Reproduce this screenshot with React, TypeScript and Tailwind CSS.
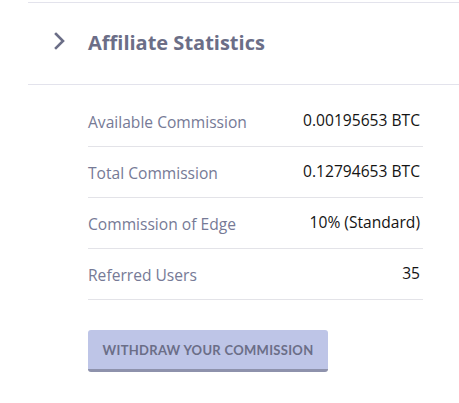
const rows = [
  { label: "Available Commission", value: "0.00195653 BTC" },
  { label: "Total Commission", value: "0.12794653 BTC" },
  { label: "Commission of Edge", value: "10% (Standard)" },
  { label: "Referred Users", value: "35" },
];

export default function App() {
  return (
    <div className="h-[403px] w-[459px] bg-white pt-[2px] font-['Open_Sans',sans-serif]">
      <div className="ml-[28px] flex h-[83px] items-center border-y border-[#e3e3ec] pl-[25px]">
        <svg width="14" height="20" viewBox="0 0 14 20" className="mt-[-6px]">
          <path d="M3 3 L10 10 L3 17" fill="none" stroke="#6b6e87" strokeWidth="2.6" strokeLinecap="square" />
        </svg>
        <h2 className="ml-[21px] mt-[-2px] text-[20px] font-bold text-[#6b6e87]">Affiliate Statistics</h2>
      </div>

      <div className="ml-[88px] w-[335px] pt-[11px]">
        {rows.map((row) => (
          <div
            key={row.label}
            className="flex h-[51px] items-center justify-between border-b border-[#e3e3e8] pt-[3px] text-[15.6px]"
          >
            <span className="text-[#767a96]">{row.label}</span>
            <span className="mt-[-4px] pr-[3px] text-[#141414]">{row.value}</span>
          </div>
        ))}
        <button
          type="button"
          className="mt-[30px] h-[42px] w-[240px] rounded-[3px] border-b-[3px] border-[#8e92ac] bg-[#bec5e7] pt-[2px] font-['Lato',sans-serif] text-[13px] font-bold tracking-[0.3px] text-[#6b6e87]"
        >
          WITHDRAW YOUR COMMISSION
        </button>
      </div>
    </div>
  );
}
